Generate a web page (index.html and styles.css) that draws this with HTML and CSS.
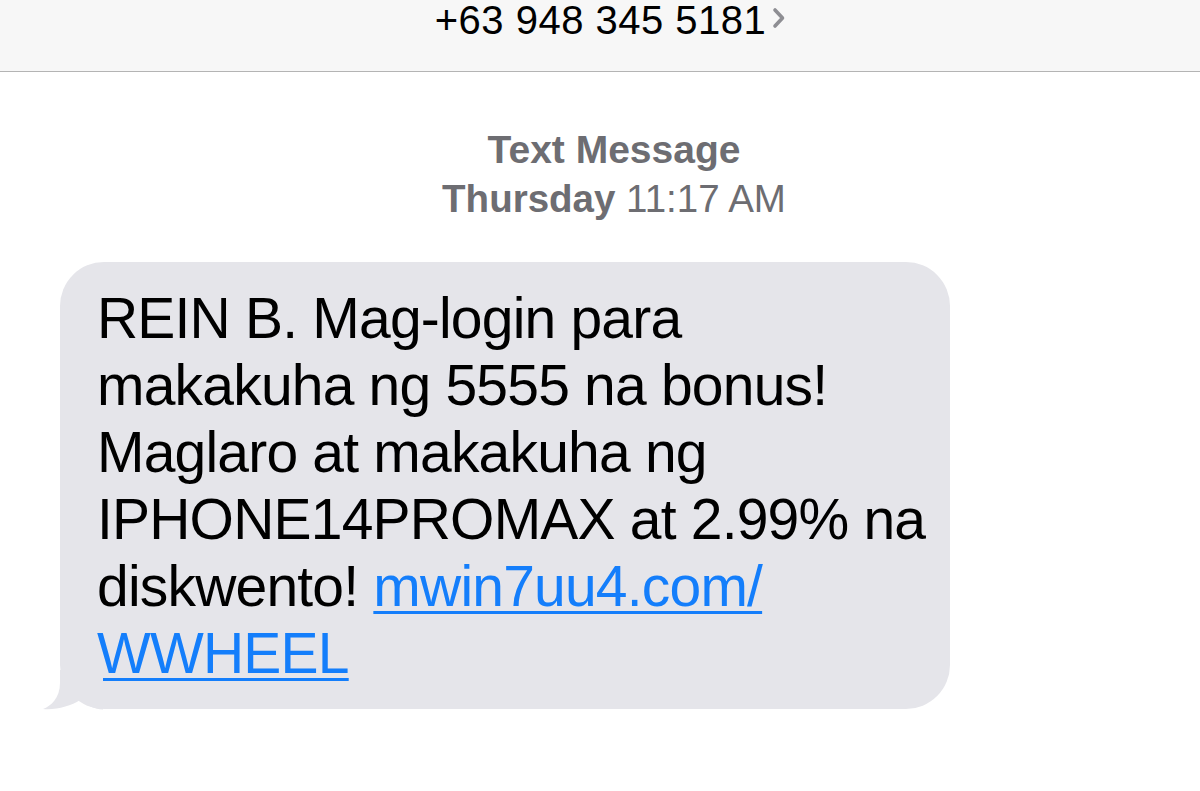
FILE: index.html
```html
<!DOCTYPE html>
<html>
<head>
<meta charset="utf-8">
<link rel="stylesheet" href="styles.css">
</head>
<body>
<header class="topbar">
  <div class="contact">+63 948 345 5181<svg class="chev" width="16" height="24" viewBox="0 0 16 24"><path d="M4 4 L11.5 12 L4 20" fill="none" stroke="#8e8e93" stroke-width="3.6" stroke-linecap="round" stroke-linejoin="round"/></svg></div>
</header>
<main class="thread">
  <div class="stamp">
    <div class="kind">Text Message</div>
    <div class="time"><b>Thursday</b> 11:17 AM</div>
  </div>
  <div class="bubble">
    <p class="msg">REIN B. Mag-login para<br>makakuha ng 5555 na bonus!<br>Maglaro at makakuha ng<br>IPHONE14PROMAX at 2.99% na<br>diskwento! <a href="#">mwin7uu4.com/</a><br><a href="#">WWHEEL</a></p>
    <svg class="tail" width="60" height="40" viewBox="0 0 60 40"><path d="M17 0 L17 13 C17 28 8 36 0 39 C12 40.5 28 36 37 30 C44 35 52 39.5 60 39.5 L60 0 Z" fill="#e5e5ea"/></svg>
  </div>
</main>
</body>
</html>
```
FILE: styles.css
```css
* { box-sizing: border-box; }
html, body { margin: 0; padding: 0; background: #fff; }
body { font-family: "Liberation Sans", Arial, sans-serif; width: 1200px; height: 791px; overflow: hidden; }
.topbar {
  height: 72px;
  background: #f7f7f7;
  border-bottom: 1px solid #b4b4b4;
  display: flex;
  justify-content: center;
}
.contact {
  font-size: 40px;
  line-height: 40px;
  letter-spacing: 0.5px;
  color: #000;
  margin-left: 22px;
  display: flex;
  align-items: flex-start;
  height: 40px;
}
.chev { margin-left: 5px; margin-top: 6px; flex: none; }
.thread { padding-top: 53px; }
.stamp { text-align: center; color: #6d6d72; margin-left: 28px; }
.kind { font-size: 39px; font-weight: bold; line-height: 49px; }
.time { font-size: 38.5px; line-height: 49px; }
.time b { font-weight: bold; }
.bubble {
  position: relative;
  margin-top: 39px;
  margin-left: 60px;
  width: 890px;
  height: 447px;
  background: #e5e5ea;
  border-radius: 44px;
  padding: 23px 20px 22px 37px;
}
.msg {
  margin: 0;
  font-size: 57px;
  line-height: 67px;
  letter-spacing: -0.8px;
  color: #000;
  white-space: nowrap;
}
.msg a { color: #147efb; text-decoration: underline; text-decoration-thickness: 3px; text-underline-offset: 5px; }
.tail { position: absolute; left: -17px; bottom: -1px; }
```
